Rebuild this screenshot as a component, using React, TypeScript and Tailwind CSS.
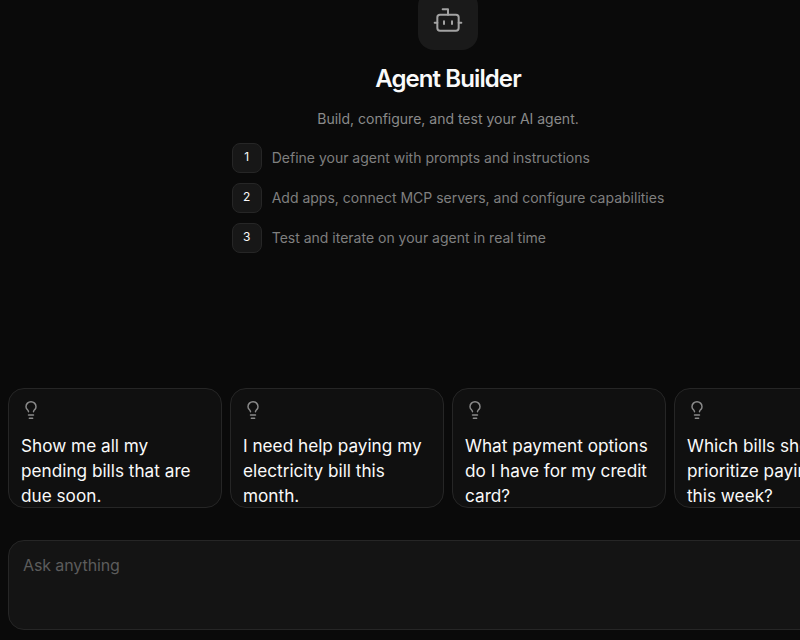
import { Bot, Lightbulb } from 'lucide-react'

const steps = [
  'Define your agent with prompts and instructions',
  'Add apps, connect MCP servers, and configure capabilities',
  'Test and iterate on your agent in real time',
]

const suggestions = [
  'Show me all my pending bills that are due soon.',
  'I need help paying my electricity bill this month.',
  'What payment options do I have for my credit card?',
  'Which bills should I prioritize paying first this week?',
]

export default function App() {
  return (
    <div className="w-[800px] h-[640px] overflow-hidden bg-[#0a0a0a] font-['Inter',sans-serif]">
      <div className="w-[896px] h-full flex flex-col px-2">
        {/* header */}
        <div className="flex flex-col items-center">
          <div className="w-[60px] h-[60px] -mt-[10px] rounded-2xl bg-[#1a1a1a] flex items-center justify-center text-[#a3a3a3]">
            <Bot size={32} strokeWidth={1.5} />
          </div>
          <h1 className="mt-[13px] text-[24px] leading-[32px] font-semibold tracking-[-0.9px] text-[#fafafa]">
            Agent Builder
          </h1>
          <p className="mt-[14px] text-[14px] leading-[20px] text-[#8a8a8a]">
            Build, configure, and test your AI agent.
          </p>
          <div className="mt-[14px] flex flex-col gap-[10px]">
            {steps.map((step, i) => (
              <div key={step} className="flex items-center gap-[10px]">
                <div className="w-[30px] h-[30px] rounded-lg border border-[#262626] bg-[#171717] flex items-center justify-center pb-[2px] text-[12px] text-[#fafafa]">
                  {i + 1}
                </div>
                <span className="text-[14px] leading-[20px] text-[#7f7f7f]">{step}</span>
              </div>
            ))}
          </div>
        </div>

        {/* suggestions */}
        <div className="mt-[135px] flex gap-2">
          {suggestions.map((text) => (
            <div
              key={text}
              className="w-[214px] h-[120px] shrink-0 overflow-hidden rounded-2xl border border-[#262626] bg-[#101010] px-[12px] pt-[11px]"
            >
              <Lightbulb size={20} strokeWidth={1.75} className="text-[#8a8a8a]" />
              <p className="mt-[13px] text-[17.2px] leading-[25px] text-[#fafafa]">{text}</p>
            </div>
          ))}
        </div>

        {/* prompt box */}
        <div className="mt-[32px] h-[90px] w-[880px] shrink-0 rounded-2xl border border-[#262626] bg-[#141414] px-[14px] pt-[12px] text-[16px] leading-[24px] tracking-[-0.1px] text-[#5c5c5c]">
          Ask anything
        </div>
      </div>
    </div>
  )
}
